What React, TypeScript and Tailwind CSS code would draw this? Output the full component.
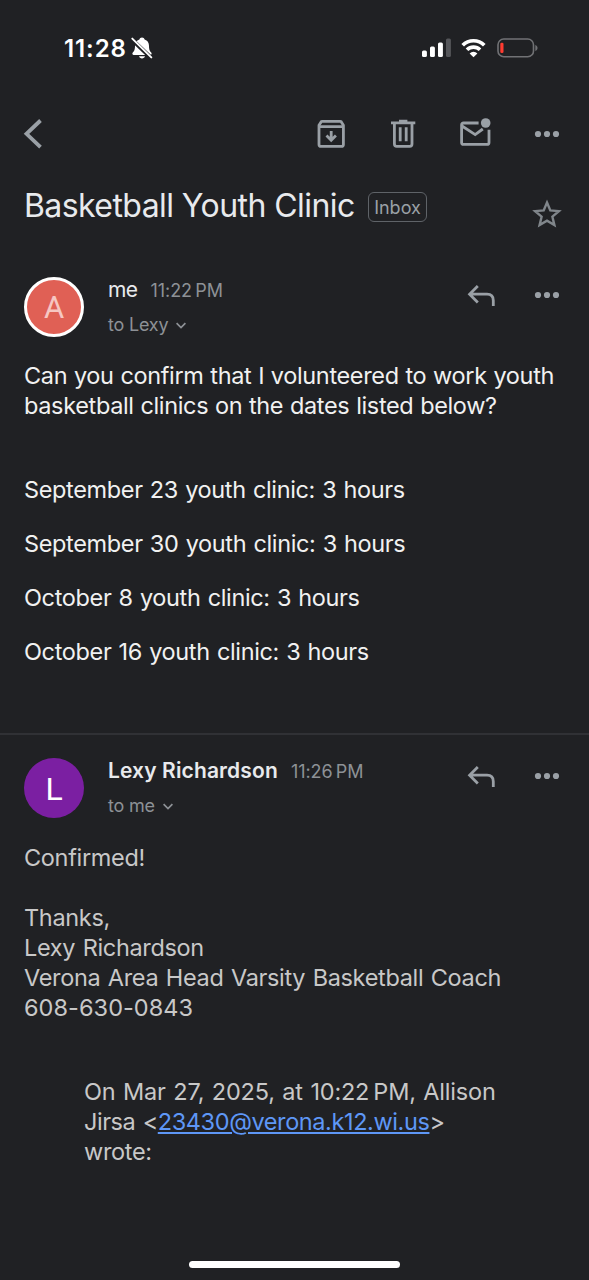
import type { ReactNode } from "react";

const CLINICS = [
  "September 23 youth clinic: 3 hours",
  "September 30 youth clinic: 3 hours",
  "October 8 youth clinic: 3 hours",
  "October 16 youth clinic: 3 hours",
];

function StatusBar() {
  return (
    <div className="flex h-24 items-center justify-between pr-[51px] pl-16">
      <div className="flex items-center gap-[3px]">
        <span className="w-16 pt-px text-[24px] font-semibold tracking-[0.9px] whitespace-nowrap text-white">11:28</span>
        <svg width="22" height="24" viewBox="0 0 22 24">
          <path
            d="M11 1.5c-1.4 0-2.3.8-2.6 2C5.5 4.4 4 6.8 4 9.8c0 4.2-.8 5.3-2.2 6.8-.9 1-.4 2.4.9 2.4h16.600c1.300 0 1.800-1.400.9-2.400-1.400-1.500-2.200-2.600-2.200-6.800 0-3-1.500-5.400-4.400-6.300-.3-1.200-1.200-2-2.600-2zM8 20.200c.4 1.400 1.600 2.200 3 2.200s2.600-.8 3-2.200z"
            fill="#fff"
          />
          <path d="M0.500 3.200l20 19" stroke="#202124" strokeWidth="4.200" />
          <path d="M1.300 2.600l19 18.800" stroke="#fff" strokeWidth="1.900" strokeLinecap="round" />
        </svg>
      </div>
      <div className="flex items-center gap-2.5">
        <svg width="29" height="20" viewBox="0 0 29 20" fill="#fff">
          <rect x="0" y="12.500" width="4.900" height="6.500" rx="1.500" />
          <rect x="8" y="8.500" width="4.900" height="10.500" rx="1.500" />
          <rect x="16" y="4.500" width="4.900" height="14.500" rx="1.500" />
          <rect x="24" y="0.500" width="4.900" height="18.500" rx="1.500" fill="#55565a" />
        </svg>
        <svg className="mr-px" width="25" height="20" viewBox="0 0 25 20" fill="none" stroke="#fff" strokeWidth="3.700">
          <path d="M1.700 7.200a15.300 15.300 0 0 1 21.600 0" />
          <path d="M6 11.800a9.300 9.300 0 0 1 13 0" />
          <path d="M12.500 19.300l-3.900-3.900a5.500 5.500 0 0 1 7.800 0z" fill="#fff" stroke="none" />
        </svg>
        <svg width="41" height="20" viewBox="0 0 41 20">
          <rect x="1" y="1" width="35.500" height="17.700" rx="5.800" fill="none" stroke="#717275" strokeWidth="1.600" />
          <rect x="3.300" y="4.800" width="3.200" height="10.200" rx="1.300" fill="#ff3b30" />
          <path d="M38.300 7c1.500.6 2.200 1.600 2.200 3s-.7 2.400-2.200 3z" fill="#717275" />
        </svg>
      </div>
    </div>
  );
}

function DotsIcon() {
  return (
    <svg width="32" height="32" viewBox="0 0 32 32" fill="#9aa0a6">
      <circle cx="7" cy="16" r="3.100" />
      <circle cx="16" cy="16" r="3.100" />
      <circle cx="25" cy="16" r="3.100" />
    </svg>
  );
}

function Toolbar() {
  return (
    <div className="flex h-[76px] items-center justify-between pr-[26px] pl-5 text-[#9aa0a6]">
      <button>
        <svg width="32" height="32" viewBox="0 0 32 32" fill="none" stroke="currentColor" strokeWidth="3.800">
          <path d="M20.500 2.500L6.500 15.800l14 13.300" />
        </svg>
      </button>
      <div className="flex gap-10">
        {/* Archive */}
        <svg width="32" height="32" viewBox="0 0 32 32" fill="none" stroke="currentColor" strokeWidth="2.800">
          <path d="M4 7.200L6.200 3.700q.3-.4.900-.4h18.200q.6 0 .9.400L28.400 7.200V26.400q0 2-2 2H6q-2 0-2-2z" strokeLinejoin="round" />
          <path d="M4 8.600h24.400M16.200 13v8.500M11.500 17.500l4.700 4.700 4.700-4.700" />
        </svg>
        {/* Delete */}
        <svg width="32" height="32" viewBox="0 0 32 32" fill="none" stroke="currentColor" strokeWidth="2.800">
          <path d="M4 4.800h24.300M12 3.200h8.400M7.400 5v21q0 2.300 2.300 2.300h13q2.300 0 2.300-2.300V5M13.200 9.300v14M19.200 9.300v14" />
        </svg>
        {/* Mark unread */}
        <svg width="32" height="32" viewBox="0 0 32 32" fill="none" stroke="currentColor" strokeWidth="2.800">
          <path d="M19.600 5H4.600q-2 0-2 2v17.400q0 2 2 2H28q2 0 2-2V11.800" />
          <path d="M3 8l13.200 8.600 7.600-5.600" />
          <circle cx="26.700" cy="5" r="4.800" fill="currentColor" stroke="none" />
        </svg>
        <DotsIcon />
      </div>
    </div>
  );
}

type HeaderProps = {
  avatar: ReactNode;
  name: ReactNode;
  time: string;
  to: string;
};

function MessageHeader({ avatar, name, time, to }: HeaderProps) {
  return (
    <div className="flex h-[60px] px-6 text-[#8d9196]">
      {avatar}
      <div className="ml-6 flex-1 text-[18px] leading-[26px]">
        <div className="flex items-baseline gap-[13px]">
          {name}
          <span className="tracking-[-0.05px]">{time}</span>
        </div>
        <div className="mt-2 flex items-center gap-2">
          <span className="tracking-[-0.2px]">{to}</span>
          <svg width="10" height="7" viewBox="0 0 10 7" fill="none" stroke="currentColor" strokeWidth="1.700">
            <path d="M0.600 1.200L5 5.600l4.400-4.400" />
          </svg>
        </div>
      </div>
      <div className="mr-0.5 flex gap-[34px] pt-0.5">
        <svg width="32" height="32" viewBox="0 0 32 32" fill="none" stroke="#9aa0a6" strokeWidth="2.800">
          <path d="M12.800 7L4.600 15.200l8.200 8.200M4.600 15.200H22q6.300 0 6.300 6.300V27" />
        </svg>
        <DotsIcon />
      </div>
    </div>
  );
}

export default function App() {
  return (
    <div className="flex h-[1280px] w-[589px] flex-col overflow-hidden bg-[#202124] font-['Inter',sans-serif]">
      <StatusBar />
      <Toolbar />

      {/* Subject */}
      <div className="flex h-[105px] items-start pt-[14px] pr-[26px] pl-6">
        <h1 className="w-[331px] text-[32px] leading-10 font-normal tracking-[-0.57px] whitespace-nowrap text-[#e8eaed]">
          Basketball Youth Clinic
        </h1>
        <span className="mt-[6px] ml-[13px] flex h-[30px] w-[59px] items-center justify-center rounded-md border-[1.5px] border-[#5f6368] text-[18px] text-[#9aa0a6]">
          Inbox
        </span>
        <svg className="mt-3 ml-auto" width="32" height="32" viewBox="0 0 32 32" fill="none" stroke="#80868b" strokeWidth="2.400">
          <path d="M16 4.500l3.300 7.900 8.600.7-6.500 5.600 2 8.400L16 22.600l-7.400 4.500 2-8.400-6.500-5.600 8.600-.7z" />
        </svg>
      </div>

      {/* First message */}
      <MessageHeader
        avatar={
          <div className="flex size-[60px] items-center justify-center rounded-full border-[3px] border-white bg-[#e06055] pt-0.5 font-['Roboto',sans-serif] text-[31px] text-[#f6c6c2]">
            A
          </div>
        }
        name={<span className="text-[21px] tracking-[-0.6px] text-[#e8eaed]">me</span>}
        time={"11:22\u2009PM"}
        to="to Lexy"
      />
      <div className="mt-6 px-6 text-[23.5px] leading-[30px] tracking-[-0.35px] text-[#f1f1f1] [word-spacing:0.5px]">
        <p className="whitespace-nowrap">
          Can you confirm that I volunteered to work youth
          <br />
          basketball clinics on the dates listed below?
        </p>
        <div className="mt-[54px] flex flex-col gap-6 [word-spacing:0.9px]">
          {CLINICS.map((clinic) => (
            <p key={clinic}>{clinic}</p>
          ))}
        </div>
      </div>

      <div className="mt-[66px] mb-[23px] h-0.5 shrink-0 bg-[#303135]" />

      {/* Reply */}
      <MessageHeader
        avatar={
          <div className="flex size-[60px] items-center justify-center rounded-full bg-[#7b1fa2] pt-0.5 font-['Roboto',sans-serif] text-[32px] text-white">
            L
          </div>
        }
        name={<span className="text-[21px] font-semibold tracking-[0.13px] text-[#e8eaed]">Lexy Richardson</span>}
        time={"11:26\u2009PM"}
        to="to me"
      />
      <div className="mt-[25px] px-6 text-[23.5px] leading-[30px] tracking-[-0.33px] whitespace-nowrap text-[#c8c8c8] [word-spacing:1.2px]">
        <p>Confirmed!</p>
        <p className="mt-[30px]">Thanks,</p>
        <p>Lexy Richardson</p>
        <p>Verona Area Head Varsity Basketball Coach</p>
        <p className="tracking-[0.05px]">608-630-0843</p>
        <blockquote className="mt-[54px] ml-[60px]">
          <span className="tracking-[-0.2px]">On Mar 27, 2025, at 10:22{"\u2009"}PM, Allison</span>
          <br />
          <span className="tracking-[-0.45px]">Jirsa &lt;</span>
          <a href="mailto:23430@verona.k12.wi.us" className="tracking-[-0.4px] text-[#5e97f6] underline">
            23430@verona.k12.wi.us
          </a>
          &gt;
          <br />
          wrote:
        </blockquote>
      </div>

      {/* Home indicator */}
      <div className="mt-auto mb-3 ml-[189px] h-[7px] w-[211px] shrink-0 rounded-full bg-white" />
    </div>
  );
}
